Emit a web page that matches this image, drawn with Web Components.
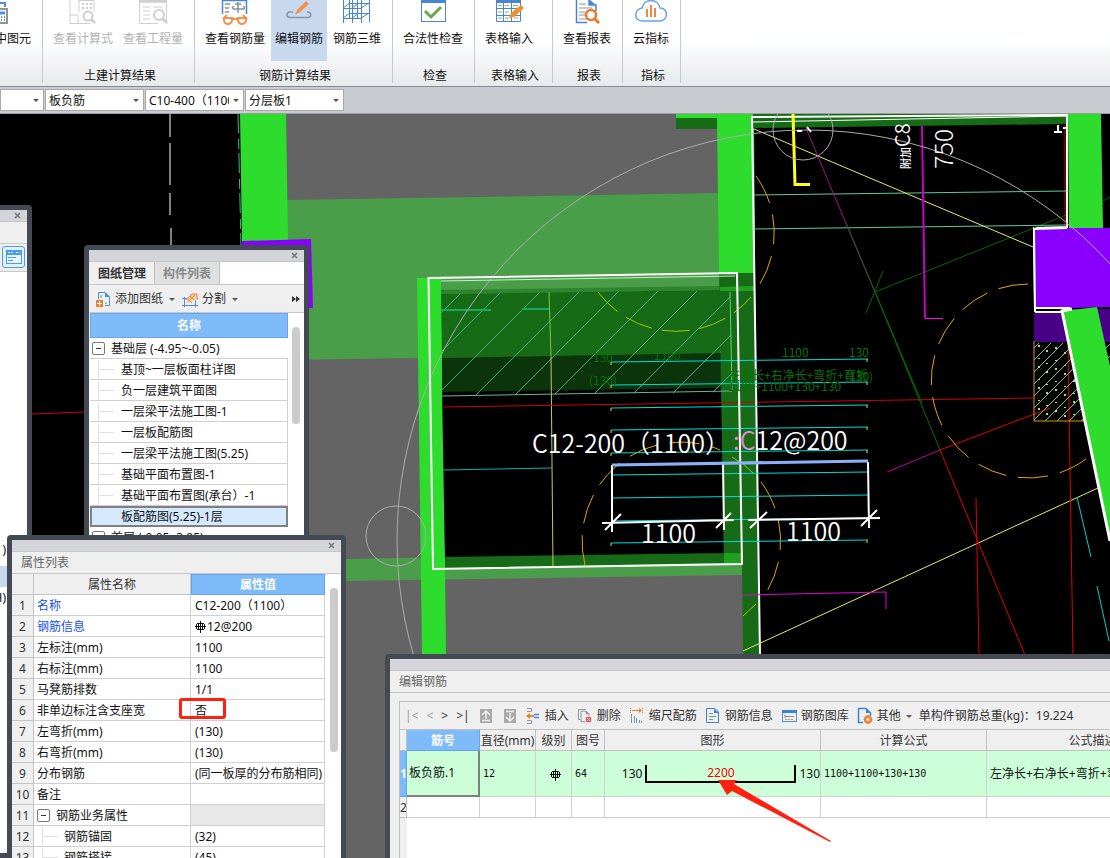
<!DOCTYPE html>
<html lang="zh-CN">
<head>
<meta charset="utf-8">
<title>编辑钢筋</title>
<style>
    html, body {
        height: 100%;
        margin: 0;
    }

    body {
        font: 12px/18px "Noto Sans", "Noto Sans CJK SC", sans-serif;
        color: #111;
        overflow: hidden;
    }
</style>
</head>
<body>
<rebar-app></rebar-app>

<script>
const base = `
    *, *::before, *::after { box-sizing: border-box; }
    button { font: inherit; color: inherit; background: none; border: 0; margin: 0; padding: 0; cursor: pointer; }
    table { border-collapse: separate; border-spacing: 0; table-layout: fixed; }
    th, td { padding: 1px 0 0; font-weight: normal; white-space: nowrap; overflow: hidden; }
    svg { display: block; flex: none; }
`;

const icons = {
    pick: `<svg width="30" height="25" viewBox="18 0 30 25" fill="none" stroke="#4a90dc" stroke-width="2"><path d="M6 0V22H16M6 3H25V7"/><rect x="15" y="9" width="12" height="14" stroke="#8a949c" fill="#fff"/><path d="M17 13H25" stroke="#4a90dc" stroke-width="3"/><path d="M17 17h2m2 0h1m2 0h1M17 20h2m2 0h1m2 0h1" stroke="#888"/></svg>`,
    formula: `<svg width="30" height="25" viewBox="0 0 30 25" fill="none" stroke="#cfcfcf" stroke-width="1"><path d="M2 0V23.500H22M2 15H10V24M11 0V12M11 .5H26V12" /><path d="M14 4h2m2 0h2m2 0h2M14 8h2m2 0h2m2 0h2M14 0h2m2 0h2m2 0h2" stroke-width="2"/><circle cx="20" cy="16" r="4.500" stroke-width="2" fill="#fff"/><path d="M23 19l4 4" stroke-width="3"/></svg>`,
    quantity: `<svg width="30" height="25" viewBox="0 0 30 25" fill="none" stroke="#cfcfcf"><path d="M1.500 0V23.500H20M28.500 0V22M1 2H29" /><path d="M1 1H29" stroke-width="3"/><path d="M5 7H12M5 11H12M5 15H12M5 19H12M15 7H25" stroke-width="1"/><circle cx="21" cy="15" r="5" stroke-width="2" fill="#fff"/><path d="M25 19l4 4" stroke-width="3"/></svg>`,
    glasses: `<svg width="30" height="25" viewBox="0 0 30 25" fill="none" stroke="#4a86d0"><path d="M2.500 14V0M26.500 14V0M2 .5H27" stroke-width="1.500"/><path d="M5 4H10M5 8H9M5 12H9" stroke="#555"/><path d="M18 2V13M14 6q-3 2 0 3h9q3-1 0-3M15 4h6" stroke="#8291a0" stroke-width="1.500"/><g stroke="#f4914a" stroke-width="2"><path d="M4 18H12V21Q11 24 8 24T4 21ZM18 18H26V21Q25 24 22 24T18 21Z"/><path d="M12 19h6M3 19l4-4M27 19l-4-4"/></g></svg>`,
    pencil: `<svg width="30" height="25" viewBox="0 0 30 25" fill="none"><path d="M9 12H6C2 12 2 17.500 6 17.500H23C28 17.500 28 12 23 12" stroke="#8395a8" stroke-width="1.500"/><path d="M11 15l2-5L22 1l3 3-9 8z" fill="#f4914a"/></svg>`,
    three: `<svg width="30" height="25" viewBox="0 0 30 25" fill="none" stroke="#4a86d0"><path d="M1.500 0V23M10.500 0V23M19.500 0V23M27.500 0V22M7.500 0V18M15.500 0V18M1 8.500H20M1 18.500H20M7 3.500H28M7 13.500H28M1 8l7-5M10 8l7-5M19 8l8-5M1 18l7-5M10 18l7-5M19 18l8-5"/></svg>`,
    check: `<svg width="30" height="25" viewBox="0 0 30 25" fill="none"><rect x="3.500" y="-2" width="24" height="23.500" fill="#fff" stroke="#4a86d0"/><path d="M3 0H28V3H3z" fill="#4a86d0"/><path d="M7 11l6 6L23 7" stroke="#6aa84f" stroke-width="3"/></svg>`,
    sheet: `<svg width="30" height="25" viewBox="0 0 30 25" fill="none" stroke="#4a86d0"><path d="M2.500 0V21.500H26.500V0M2 8.500H27M2 15.500H27M9.500 3V22M17.500 3V22"/><path d="M2 1.500H27" stroke-width="3"/><path d="M4 5.500h4M4 12h4M4 18h4M11 5.500h4M11 12h4M11 18h4M19 5.500h5M20 18h4" stroke="#98a4ae"/><path d="M15 18l2-5L27 5l3 3-10 9z" fill="#f09020" stroke="none"/></svg>`,
    report: `<svg width="30" height="25" viewBox="0 0 30 25" fill="none"><path d="M4.500 0V22.500H15M17 0V5H24V11" stroke="#4a86d0" stroke-width="1.500"/><path d="M17 0h1l6 5H17z" fill="#4a86d0"/><path d="M7 4h7M7 8h13M7 12h6M7 15h6M7 19h8" stroke="#8a98a2"/><circle cx="19" cy="15" r="5" stroke="#f0762e" stroke-width="2.500" fill="#fff"/><path d="M22 18l5 5" stroke="#f0762e" stroke-width="3"/></svg>`,
    cloud: `<svg width="34" height="25" viewBox="0 0 34 25" fill="none"><path d="M9 21C-1 21 0 9 8 8C10-2 24-2 26 8C35 8 34 21 26 21Z" fill="#fff" stroke="#62a5ee" stroke-width="1.500"/><path d="M13 17v-8M17 17V5M21 17v-9" stroke="#f08a42" stroke-width="2"/></svg>`,
    insert: `<svg width="14" height="16" viewBox="0 0 14 16" fill="none"><path d="M1 .5H5.500V3.500H1M1 12.500H5.500V15.500H1" stroke="#8a98a2"/><path d="M2 8H8" stroke="#f08030" stroke-width="2"/><path d="M0 8l4-3v6z" fill="#f08030"/><path d="M8 6.500H13M8 9.500H13" stroke="#4a86d0" stroke-width="1.500"/></svg>`,
    remove: `<svg width="16" height="16" viewBox="0 0 16 16" fill="none"><path d="M3 12H.5V.5H9M3.500 2.500H9L12.500 6V8M3.500 2.500V14.500H8" stroke="#7d909c"/><path d="M9 2l4 4H9z" fill="#7d909c"/><rect x="9" y="9" width="6" height="6" fill="#e04848"/><path d="M10 10l4 4m0-4l-4 4" stroke="#fff"/></svg>`,
    scale: `<svg width="14" height="16" viewBox="0 0 14 16" fill="none"><path d="M2 2.500H10" stroke="#f08030"/><path d="M9 0l3 2.500L9 5z" fill="#f08030"/><path d="M.5 0V5M12.500 0V5" stroke="#f08030" stroke-dasharray="1 1"/><path d="M1.500 6V15M4.500 8V15M6.500 10V15M9.500 12V15M11.500 13V15" stroke="#8193a0"/></svg>`,
    info: `<svg width="14" height="16" viewBox="0 0 14 16" fill="none"><path d="M.5.5H9L12.500 4V14.500H.5Z" stroke="#3b83d2"/><path d="M8 1l5 4H8z" fill="#3b83d2"/><path d="M3 5.500h4M3 8.500h7M3 11.500h4" stroke="#7d90a0"/></svg>`,
    library: `<svg width="14" height="16" viewBox="0 0 14 16" fill="none"><rect x=".5" y="2.500" width="14" height="11" stroke="#5b8fc8"/><path d="M0 3.500H15" stroke="#3b83d2" stroke-width="3"/><path d="M3 8.500H12M3 6.500V10" stroke="#7d90a0"/><path d="M3 11.500H12" stroke="#e08850" stroke-dasharray="2 1"/></svg>`,
    other: `<svg width="14" height="16" viewBox="0 0 14 16" fill="none"><path d="M5 14.500H.5V.5H8L12.500 5V8" stroke="#3b83d2" stroke-width="1.500"/><path d="M8 0l5 5H8z" fill="#3b83d2"/><circle cx="10" cy="11.500" r="3" stroke="#f08030" stroke-width="2.500"/><path d="M10 7v2m0 5v2M5.500 11.500h2m5 0h2" stroke="#f08030"/></svg>`,
    up: `<svg width="12" height="14" viewBox="0 0 12 14"><path fill="#aaa" d="M0 0h12v14H0z"/><path d="M2 6l4-4 4 4M6 3v7M2 11.500h8" fill="none" stroke="#eee" stroke-width="1.500"/></svg>`,
    down: `<svg width="12" height="14" viewBox="0 0 12 14"><path fill="#aaa" d="M0 0h12v14H0z"/><path d="M2 8l4 4 4-4M6 4v7M2 2.500h8" fill="none" stroke="#eee" stroke-width="1.500"/></svg>`,
    add: `<svg width="15" height="15" viewBox="0 0 15 15" fill="none"><path d="M2.500 7V.5H9L13.500 5V13.500H9M5 3v3M9 11h2" stroke="#4a90dc"/><path d="M9 0l5 5H9z" fill="#4a90dc"/><path fill="#f08030" d="M0 8h7v7H0z"/><path d="M3.500 9v5M1 11.500h5" stroke="#fff"/></svg>`,
    split: `<svg width="16" height="15" viewBox="0 0 16 15" fill="none"><path d="M0 6.500H16M0 13.500H16M2.500 5V15M13.500 5V15" stroke="#4a90dc"/><path d="M4 9L10 2h5v6h-4l-3 3z" fill="#fbd3b4"/><path d="M4 8l6-6h5v5M6 10l7-7M5 6l5 5M8 4l4 4" stroke="#f08030"/></svg>`,
    grade: `<svg width="11" height="12" viewBox="0 0 11 12" fill="none" stroke="#111" shape-rendering="crispEdges"><path d="M5.500 0V12M3.500 2V9M7.500 2V9M2 2.500H9M1.500 3V8M9.500 3V8M2 8.500H9M0 5.500H11"/></svg>`,
    panel: `<svg width="16" height="14" viewBox="0 0 16 14"><rect x=".5" y=".5" width="15" height="13" fill="#eaf4ff" stroke="#4a9cf0"/><path fill="#4a9cf0" d="M0 0h16v5H0z"/><path d="M2 2.500h5m3 0h4" stroke="#fff" stroke-dasharray="2 1"/><path d="M2 7.500h8M2 10.500h5" stroke="#4a9cf0"/></svg>`
};

class UiElement extends HTMLElement {
    constructor() {
        super();
        this.attachShadow({ mode: 'open' });
    }

    connectedCallback() {
        this.shadowRoot.innerHTML = `<style>${base}${this.styles()}</style>${this.render()}`;
    }
}

class RibbonButton extends UiElement {
    styles() {
        return `
            :host { display: block; flex: none; }
            button {
                display: flex;
                flex-direction: column;
                align-items: center;
                gap: 5px;
                height: 61px;
                padding: 0 4px;
                white-space: nowrap;
            }
            :host([active]) button { background: #c8d8ef; }
            button:disabled { color: #b3b3b3; }
        `;
    }

    render() {
        const off = this.hasAttribute('off') ? 'disabled' : '';
        return `<button ${off}>${icons[this.getAttribute('icon')]}<span><slot></slot></span></button>`;
    }
}

class RibbonGroup extends UiElement {
    styles() {
        return `
            :host {
                display: flex;
                flex: none;
                flex-direction: column;
                height: 83px;
                border-right: 1px solid #c6c9cc;
            }
            .buttons { display: flex; gap: 2px; padding: 0 7px 0 6px; }
            .name { text-align: center; margin-top: 6px; padding-left: 3px; }
            :host([cut]) { width: 43px; align-items: flex-end; }
        `;
    }

    render() {
        return `<div class="buttons"><slot></slot></div><div class="name">${this.getAttribute('name') || ''}</div>`;
    }
}

class AppRibbon extends UiElement {
    styles() {
        return `
            :host {
                display: flex;
                height: 87px;
                overflow: hidden;
                background: linear-gradient(#fff 45%, #e6eaeb);
                border-bottom: 1px solid #858b90;
            }
        `;
    }

    render() {
        return `
            <ribbon-group cut><ribbon-button icon="pick">中图元</ribbon-button></ribbon-group>
            <ribbon-group name="土建计算结果">
                <ribbon-button icon="formula" off>查看计算式</ribbon-button>
                <ribbon-button icon="quantity" off>查看工程量</ribbon-button>
            </ribbon-group>
            <ribbon-group name="钢筋计算结果">
                <ribbon-button icon="glasses">查看钢筋量</ribbon-button>
                <ribbon-button icon="pencil" active>编辑钢筋</ribbon-button>
                <ribbon-button icon="three">钢筋三维</ribbon-button>
            </ribbon-group>
            <ribbon-group name="检查"><ribbon-button icon="check">合法性检查</ribbon-button></ribbon-group>
            <ribbon-group name="表格输入" style="width: 78px"><ribbon-button icon="sheet">表格输入</ribbon-button></ribbon-group>
            <ribbon-group name="报表"><ribbon-button icon="report">查看报表</ribbon-button></ribbon-group>
            <ribbon-group name="指标"><ribbon-button icon="cloud">云指标</ribbon-button></ribbon-group>
        `;
    }
}

class FilterBar extends UiElement {
    styles() {
        return `
            :host {
                display: flex;
                height: 27px;
                padding: 2px 0;
                gap: 1px;
                background: #c9ccd1;
                border-bottom: 1px solid #9b9ea2;
            }
            label { display: grid; width: 99px; }
            label:first-of-type { width: 44px; }
            select {
                grid-area: 1 / 1;
                appearance: none;
                width: 100%;
                height: 22px;
                margin: 0;
                padding: 1px 14px 0 3px;
                border: 1px solid #a9a9a9;
                border-radius: 0;
                background: #fff;
                color: #111;
                font: inherit;
            }
            label::after {
                content: "";
                grid-area: 1 / 1;
                place-self: center end;
                margin-right: 5px;
                border: 3px solid transparent;
                border-top-color: #555;
                border-bottom: 0;
            }
        `;
    }

    render() {
        return ['', '板负筋', 'C10-400（1100）', '分层板1'].map((v, i) => `
            <label><select aria-label="构件 ${i + 1}"><option>${v}</option></select></label>`).join('');
    }
}

class CadCanvas extends UiElement {
    styles() {
        return `
            :host { display: block; overflow: hidden; background: #000; }
            svg { width: 100%; height: 100%; fill: none; }
            text { font-family: "Noto Sans CJK SC", sans-serif; stroke: none; }
            .big { font-size: 25px; font-weight: 350; fill: #fff; }
            .note { font-size: 12px; fill: #087008; }
        `;
    }

    render() {
        // distribution bars, each rises 3px to the right
        const bars = [362, 385, 408, 430, 453, 475, 498, 521, 543].map(y =>
            `<path d="M611 ${y}L868 ${y - 3}"/>`).join('');
        const ticks = [362, 385, 408, 430, 453, 543].map(y =>
            `<path d="M611 ${y}v3M867 ${y - 3}v3"/>`).join('');
        let hatch = '';
        for (let x = 359; x < 740; x += 39) hatch += `M${x} 395l104-104`;
        let soil = '';
        for (let i = 0; i < 13; i++) soil += `M1026 ${356 + i * 12}l84-84`;
        return `
            <svg><g transform="translate(0 -114)">
                <path fill="#646464" d="M286 113H718L744 565V870H286z"/>
                <path fill="#4a9e4a" d="M286 200L720 193V290L418 358L286 360zM345 559L742 552V575L345 581z"/>
                <path fill="#2ddc2d" d="M240 113H286L288 241H242zM676 113H754L755 275H719L717 118H676z"/>
                <path fill="#8a00ff" d="M242 241L311 239L313 308H242z"/>
                <path fill="#176b17" d="M676 118H717V129H676z"/>
                <path stroke="#48b58a" d="M238 113L241 246" stroke-dasharray="20 6 10 4"/>
                <path stroke="#fff" d="M170 113v24m0 6v42m0 8v22m1 13v20"/>
                <path stroke="#d00000" d="M32 414L84 412"/>
                <path fill="#2ddc2d" d="M417 278H442L446 655H422z"/>
                <path fill="#000" d="M442 390L722 386L724 556L445 559z"/>
                <path fill="#4a9e4a" d="M441 278L720 273V290L441 294z"/>
                <path fill="#2f842f" d="M441 290L720 286V290L441 294z"/>
                <path fill="#176b17" d="M441 294L720 290V354L442 358z"/>
                <path fill="#0b340b" d="M442 358L721 353V388L442 392z"/>
                <path fill="#176b17" d="M445 557L724 553V563L445 568zM719 273H755L760 655H743L742 565L724 565z"/>
                <path fill="#20a020" d="M720 287L754 286V291H720zM724 553H741V564H724z"/>
                <path stroke="#4aa880" clip-path="url(#slab)" d="${hatch}"/>
                <clipPath id="slab"><path d="M441 294L730 290L732 392L442 396z"/></clipPath>
                <path stroke="#58d878" d="M730 292L732 391"/>
                <path stroke="#62b892" d="M442 396L732 391"/>
                <path stroke="#18a860" stroke-width="2" d="M441 310L491 310M522 309L549 309"/>
                <path stroke="#7ac840" d="M549 292L551 357"/><path stroke="#c8c860" d="M551 357L553 567"/>
                <path stroke="#00b4b4" d="M443 470L552 468"/>
                <path stroke="#d00000" d="M443 407L1034 398"/>

                <path fill="#176b17" d="M753 114H1067V124L753 128z"/>
                <path stroke="#fff" d="M753 122L1067 116"/>
                <path stroke="#fff" stroke-width="2" d="M760 655L752 117L1067 115V227L1034 228L1035 312"/>
                <path stroke="#d00000" d="M1065 125V226"/>
                <path fill="#2ddc2d" d="M1068 113H1101L1103 228H1069z"/>
                <path stroke="#006800" d="M866 313L883 271M922 403L875 292L1066 215M1103 201L1110 197"/>
                <path stroke="#60c89c" d="M754 195L1067 191M754 229L1067 225"/>
                <path stroke="#e8e868" d="M754 129L1033 247M743 651L1098 488"/>
                <path stroke="#a0108a" d="M806 128L855 245L875 292"/>
                <path stroke="#067006" d="M847 225L875 292L940 450"/>
                <path stroke="#c800c8" stroke-width="2" d="M922 126L925 318"/><path stroke="#f0f" d="M925 318.500h18"/>
                <path stroke="#e000e0" d="M743 595L886 592V609"/>
                <path stroke="#e00000" d="M940 450L1025 655M976 498L979 655M1068 345L1073 655M940 450L1050 408"/>
                <path stroke="#c0009a" d="M887 472L940 450"/>
                <path stroke="#00d0d0" d="M1077 497L1091 557M1097 586L1109 641"/>
                <path stroke="#ffff20" stroke-width="3" d="M793 113L795 184.500H810"/>
                <path fill="#8a00ff" d="M1034 228H1110V307L1035 309z"/>
                <path stroke="#fff" stroke-width="2" d="M1067 228L1034 229L1035 308H1070M1035 312H1066"/>
                <path fill="#470086" d="M1034 313H1064V309H1110V342H1034z"/>
                <clipPath id="soil"><path d="M1034 343H1110V421H1034z"/></clipPath>
                <path stroke="#78c868" clip-path="url(#soil)" d="${soil}"/>
                <path stroke="#98e888" stroke-width="2" stroke-dasharray="2 11 1 7" clip-path="url(#soil)" d="M1039 345V421M1047 350V421M1056 347V421M1065 352V421M1074 380V421"/>
                <path stroke="#d89800" d="M1034 341V421H1086"/>
                <path fill="#2ddc2d" d="M1062 311L1097 307L1110 366V541z"/>
                <path stroke="#fff" stroke-width="3" d="M1072 309L1062 311L1110 541"/>

                <g stroke="#aaa">
                    <circle cx="807" cy="540" r="410"/>
                    <circle cx="396" cy="536" r="30"/>
                    <circle cx="803" cy="130" r="30"/>
                </g>
                <g stroke="#e8a400" stroke-dasharray="30 12">
                    <path d="M1028 284A97 97 0 1 0 1091 455"/>
                    <path d="M756 176A98 98 0 0 1 758 287"/>
                    <path d="M585 565A99 99 0 0 1 720 450M761 482A99 99 0 0 1 764 596"/>
                </g>
                <g stroke="#98c818" stroke-dasharray="28 10">
                    <path d="M598 292A98 98 0 0 0 751 297M732 457Q744 463 754 474M743 616L756 604"/>
                </g>
                <g stroke="#00dcdc">${bars}</g>
                <g stroke="#e0e020">${ticks}</g>

                <g stroke="#fff" stroke-width="2">
                    <path d="M428.500 278L737 273L742 564L433 569z"/>
                    <path stroke="#c8f0c8" stroke-width="1" d="M441 281L735 276"/>
                    <path d="M612 465V532M723 463L724 530M868 462L869 528M602 523L734 520M748 520L880 518"/>
                    <path d="M605 530l16-16M716 528l15-15M750 528l17-16M861 526l16-16"/>
                </g>
                <path stroke="#8cb0f8" stroke-width="3" d="M612 465L868 461"/>
                <path stroke="#fff" stroke-width="2" d="M797 131h5m5-4l4 5M1054 132h8m-4 0v-7m5 3h5"/>

                <text class="big" x="532" y="453">C12-200（1100）</text>
                <text class="big" x="733" y="450"><tspan fill="#e888d8">:C</tspan>12@200</text>
                <text class="big" x="641" y="543">1100</text>
                <text class="big" x="786" y="541">1100</text>
                <text class="note" x="782" y="357">1100</text>
                <text class="note" x="849" y="357">130</text>
                <text class="note" x="593" y="362">130</text>
                <text class="note" x="589" y="385">(130)</text>
                <text class="note" x="654" y="360">1100</text>
                <text class="note" x="728" y="380">左净长+右净长+弯折+弯折</text>
                <text class="note" x="845" y="381">(130)</text>
                <text class="note" x="728" y="391">1100+1100+130+130</text>
                <text class="big" transform="translate(910 169) rotate(-90)"><tspan font-size="11" font-weight="500">附加</tspan><tspan font-size="20">C8</tspan></text>
                <text class="big" transform="translate(953 169) rotate(-90)" style="font-weight: 300">750</text>
            </g></svg>
        `;
    }
}

class ToolWindow extends UiElement {
    styles() {
        return `
            :host {
                position: absolute;
                display: flex;
                flex-direction: column;
                overflow: hidden;
                border: 5px solid #434a54;
                border-radius: 4px 4px 0 0;
                background: #fff;
            }
            header {
                display: flex;
                flex: none;
                align-items: center;
                justify-content: flex-end;
                height: 12px;
                padding-right: 6px;
                background: #d3d5db;
                border-bottom: 1px solid #c3c5ca;
            }
            h2 {
                flex: none;
                height: 22px;
                margin: 0;
                padding: 2px 9px 0;
                font: inherit;
                color: #666;
                background: #efefef;
                border-bottom: 1px solid #c8c8c8;
            }
        `;
    }

    render() {
        const name = this.getAttribute('name');
        const close = this.hasAttribute('plain') ? '' : `
            <button aria-label="关闭"><svg width="7" height="7" viewBox="0 0 7 7" stroke="#777" stroke-width="1.500"><path d="M1 1l5 5m0-5L1 6"/></svg></button>`;
        return `<header>${close}</header>${name ? `<h2>${name}</h2>` : ''}<slot></slot>`;
    }
}

class SideDock extends UiElement {
    styles() {
        return `
            :host { display: block; flex: 1; }
            .strip { height: 22px; background: #efefef; border-bottom: 1px solid #c8c8c8; }
            .tools { display: flex; height: 28px; padding: 2px; background: #efefef; border-bottom: 1px solid #c8c8c8; }
            .tools button { display: grid; place-items: center; width: 23px; height: 22px; border: 1px solid #4a9cf0; border-radius: 3px; background: #e4f1ff; }
            ul { width: 6px; margin: 269px 0 0; padding: 0; list-style: none; }
            li { display: flex; justify-content: flex-end; height: 24px; overflow: hidden; }
            .on { width: 7px; height: 21px; margin: 1px 0 2px; background: #c8d8ef; }
        `;
    }

    render() {
        return `
            <div class="strip"></div>
            <div class="tools"><button aria-label="属性">${icons.panel}</button></div>
            <ul><li>)</li><li class="on"></li><li>H)</li></ul>
        `;
    }
}

class DrawingList extends UiElement {
    styles() {
        return `
            :host { display: block; }
            .tabs { display: flex; height: 23px; background: #efefef; border-bottom: 1px solid #c8c8c8; }
            .tabs button { padding: 1px 8px 0 9px; font-weight: bold; border-right: 1px solid #c0c0c0; color: #333; }
            .tabs button + button { background: #e0e0e0; color: #888; font-weight: bold; padding: 1px 8px 0; }
            .tabs::after { content: ""; flex: 1; background: #fff; }
            .tools { display: flex; align-items: center; height: 28px; padding: 1px 4px 0 7px; gap: 7px; background: #efefef; border-bottom: 1px solid #c8c8c8; color: #333; }
            .tools button { display: flex; align-items: center; gap: 4px; }
            .tools button:last-child { margin-left: auto; }
            .drop { border: 3px solid transparent; border-top-color: #555; border-bottom: 0; margin-left: 2px; }
            .body { display: flex; padding-left: 1px; gap: 4px; }
            table { width: 198px; }
            th { height: 25px; background: #7fbafa; border: 1px solid #66a5e8; color: #fff; font-weight: bold; }
            td { height: 21px; border-bottom: 1px solid #d0d0d0; border-right: 1px solid #d0d0d0; }
            td > div { display: flex; align-items: center; height: 19px; }
            .parent { border-right: 0; }
            .box { width: 13px; height: 13px; margin: 0 6px 0 2px; border: 1px solid #777; border-radius: 2px; display: grid; place-items: center; }
            .box::before { content: ""; width: 5px; height: 1px; background: #333; }
            .leaf::before { content: ""; width: 16px; height: 19px; margin: 0 7px 0 8px; border-left: 1px solid #e0e0e0; background: linear-gradient(#e0e0e0, #e0e0e0) 0 9px / 16px 1px no-repeat; }
            .on { background: #d5e9ff; border: 2px solid #808080; padding: 0; }
            .on > div { height: 17px; }
            .on .leaf, .on.leaf { padding-left: 0; }
            .on > .leaf::before { height: 17px; margin-left: 6px; border: 0; background: none; }
            .bar { width: 8px; height: 97px; margin-top: 14px; border-radius: 4px; background: #cbcbcb; }
        `;
    }

    render() {
        const rows = ['基顶~一层板面柱详图', '负一层建筑平面图', '一层梁平法施工图-1', '一层板配筋图', '一层梁平法施工图(5.25)', '基础平面布置图-1', '基础平面布置图(承台）-1', '板配筋图(5.25)-1层'];
        return `
            <div class="tabs"><button>图纸管理</button><button>构件列表</button></div>
            <div class="tools">
                <button>${icons.add}添加图纸<i class="drop"></i></button>
                <button>${icons.split}分割<i class="drop"></i></button>
                <button aria-label="更多"><svg width="8" height="6" viewBox="0 0 8 6" fill="#333"><path d="M0 0l4 3-4 3zM4 0l4 3-4 3z"/></svg></button>
            </div>
            <div class="body">
                <table>
                    <tr><th>名称</th></tr>
                    <tr><td class="parent"><div><i class="box"></i>基础层 (-4.95~-0.05)</div></td></tr>
                    ${rows.map((r, i) => `<tr><td class="${i === 7 ? 'on' : ''}"><div class="leaf">${r}</div></td></tr>`).join('')}
                    <tr><td class="parent"><div><i class="box"></i>首层 (-0.05~3.95)</div></td></tr>
                </table>
                <div class="bar"></div>
            </div>
        `;
    }
}

class PropertyGrid extends UiElement {
    styles() {
        return `
            :host { display: flex; gap: 5px; }
            table { width: 313px; flex: none; }
            th, td { height: 21px; border-right: 1px solid #d0d0d0; border-bottom: 1px solid #d0d0d0; text-align: left; }
            td { padding-left: 3px; }
            td + td { padding-left: 4px; }
            th { background: #efefef; text-align: center; color: #333; border-color: #c4c4c4; }
            th.on { background: #7fbafa; border: 1px solid #66a5e8; color: #fff; font-weight: bold; padding: 0; }
            .key { color: #1450f0; }
            .empty { background: #e8e8e8; }
            .mark { overflow: visible; position: relative; }
            .mark::after { content: ""; position: absolute; inset: -2px auto auto -12px; width: 47px; height: 21px; border: 3px solid #ff2010; border-radius: 3px; }
            .row { display: flex; align-items: center; gap: 1px; height: 19px; }
            .box { width: 13px; height: 13px; margin-right: 5px; border: 1px solid #777; border-radius: 2px; display: grid; place-items: center; }
            .box::before { content: ""; width: 5px; height: 1px; background: #333; }
            .leaf::before { content: ""; width: 16px; height: 19px; margin: 0 5px; border-left: 1px solid #e0e0e0; background: linear-gradient(#e0e0e0, #e0e0e0) 0 9px / 16px 1px no-repeat; }
            .bar { width: 8px; height: 164px; margin-top: 14px; border-radius: 4px; background: #cbcbcb; }
        `;
    }

    render() {
        const rows = [
            ['<span class="key">名称</span>', 'C12-200（1100）'],
            ['<span class="key">钢筋信息</span>', `<div class="row">${icons.grade}12@200</div>`],
            ['左标注(mm)', '1100'],
            ['右标注(mm)', '1100'],
            ['马凳筋排数', '1/1'],
            ['非单边标注含支座宽', '否', 'mark'],
            ['左弯折(mm)', '(130)'],
            ['右弯折(mm)', '(130)'],
            ['分布钢筋', '(同一板厚的分布筋相同)'],
            ['备注', ''],
            ['<div class="row"><i class="box"></i>钢筋业务属性</div>', '', 'empty'],
            ['<div class="row leaf">钢筋锚固</div>', '(32)'],
            ['<div class="row leaf">钢筋搭接</div>', '(45)']
        ];
        return `
            <table>
                <colgroup><col style="width: 22px"><col style="width: 157px"><col></colgroup>
                <tr><th></th><th>属性名称</th><th class="on">属性值</th></tr>
                ${rows.map((r, i) => `<tr><th>${i + 1}</th><td>${r[0]}</td><td class="${r[2] || ''}">${r[1]}</td></tr>`).join('')}
            </table>
            <div class="bar"></div>
        `;
    }
}

class RebarEditor extends UiElement {
    styles() {
        return `
            :host { display: block; flex: 1; padding: 8px 0 0 9px; background: #efefef; }
            .frame { height: 100%; border: solid #c0c0c0; border-width: 1px 0 0 1px; background: linear-gradient(90deg, #efefef 7px, #fff 7px); }
            .tools { display: flex; align-items: center; height: 28px; padding: 1px 0 0 5px; gap: 10px; background: #efefef; border-bottom: 1px solid #c0c0c0; color: #333; white-space: nowrap; }
            .nav, .move, .acts { display: flex; align-items: center; }
            .nav { gap: 8px; }
            .nav button:disabled { color: #999; }
            .move { gap: 12px; }
            .acts { gap: 9px; }
            .acts button { display: flex; align-items: center; gap: 5px; }
            .acts button svg { width: 14px; overflow: visible; }
            .acts span { margin-left: -2px; }
            .drop { border: 3px solid transparent; border-top-color: #555; border-bottom: 0; }
            table { width: 799px; }
            th, td { height: 21px; border-right: 1px solid #d0d0d0; border-bottom: 1px solid #d0d0d0; }
            th { background: #efefef; color: #333; border-color: #c0c0c0; }
            th.on { background: #7fbafa; border-color: #66a5e8; color: #fff; font-weight: bold; }
            td { padding: 0 0 0 3px; }
            .first td { height: 46px; background: #ccffd8; }
            .first td.cur { padding-left: 2px; border-right: 2px solid #808080; border-bottom: 2px solid #808080; }
            .first td.num { font-family: "DejaVu Sans Mono", monospace; font-size: 10px; }
            .mid svg { margin: 2px auto 0; }
            .shape { display: flex; align-items: center; justify-content: flex-end; gap: 3px; }
            .bend { width: 151px; height: 18px; border: solid #000; border-width: 0 2px 2px; text-align: center; color: #e00; line-height: 16px; }
        `;
    }

    render() {
        const act = (icon, name) => `<button>${icons[icon]}${name}</button>`;
        return `
            <div class="frame">
                <div class="tools">
                    <div class="nav"><button disabled>|&lt;</button><button disabled>&lt;</button><button>&gt;</button><button>&gt;|</button></div>
                    <div class="move"><button aria-label="上移">${icons.up}</button><button aria-label="下移">${icons.down}</button></div>
                    <div class="acts">
                        ${act('insert', '插入')}${act('remove', '删除')}${act('scale', '缩尺配筋')}${act('info', '钢筋信息')}${act('library', '钢筋图库')}
                        ${act('other', '其他<i class="drop"></i>')}
                        <span>单构件钢筋总重(kg)：19.224</span>
                    </div>
                </div>
                <table>
                    <colgroup>
                        <col style="width: 7px"><col style="width: 73px"><col style="width: 56px"><col style="width: 36px">
                        <col style="width: 33px"><col style="width: 216px"><col style="width: 166px"><col>
                    </colgroup>
                    <tr><th></th><th class="on">筋号</th><th>直径(mm)</th><th>级别</th><th>图号</th><th>图形</th><th>计算公式</th><th>公式描述</th></tr>
                    <tr class="first">
                        <th class="on">1</th><td class="cur">板负筋.1</td><td class="num">12</td><td class="mid">${icons.grade}</td><td class="num">64</td>
                        <td><div class="shape"><span>130</span><div class="bend">2200</div><span>130</span></div></td>
                        <td class="num">1100+1100+130+130</td><td>左净长+右净长+弯折+弯折</td>
                    </tr>
                    <tr><th>2</th><td></td><td></td><td></td><td></td><td></td><td></td><td></td></tr>
                </table>
            </div>
        `;
    }
}

class RebarApp extends UiElement {
    styles() {
        return `
            :host { position: relative; display: flex; flex-direction: column; height: 100vh; overflow: hidden; }
            cad-canvas { flex: 1; min-height: 0; }
            .dock { left: -5px; top: 205px; bottom: 0; width: 37px; }
            .drawings { left: 84px; top: 245px; width: 225px; }
            .props { left: 7px; top: 535px; bottom: -5px; width: 339px; }
            .editor { left: 385px; top: 654px; right: -5px; bottom: -5px; }
            .arrow { position: absolute; left: 715px; top: 776px; }
        `;
    }

    render() {
        return `
            <app-ribbon></app-ribbon>
            <filter-bar></filter-bar>
            <cad-canvas></cad-canvas>
            <tool-window class="dock"><side-dock></side-dock></tool-window>
            <tool-window class="drawings"><drawing-list></drawing-list></tool-window>
            <tool-window class="props" name="属性列表"><property-grid></property-grid></tool-window>
            <tool-window class="editor" name="编辑钢筋" plain><rebar-editor></rebar-editor></tool-window>
            <svg class="arrow" width="120" height="70" viewBox="715 776 120 70" fill="#ff2010">
                <path d="M718 780L737 780L734 784L831 841L830 842L732 791L727 795z"/>
            </svg>
        `;
    }
}

customElements.define('ribbon-button', RibbonButton);
customElements.define('ribbon-group', RibbonGroup);
customElements.define('app-ribbon', AppRibbon);
customElements.define('filter-bar', FilterBar);
customElements.define('cad-canvas', CadCanvas);
customElements.define('tool-window', ToolWindow);
customElements.define('side-dock', SideDock);
customElements.define('drawing-list', DrawingList);
customElements.define('property-grid', PropertyGrid);
customElements.define('rebar-editor', RebarEditor);
customElements.define('rebar-app', RebarApp);
</script>
</body>
</html>
